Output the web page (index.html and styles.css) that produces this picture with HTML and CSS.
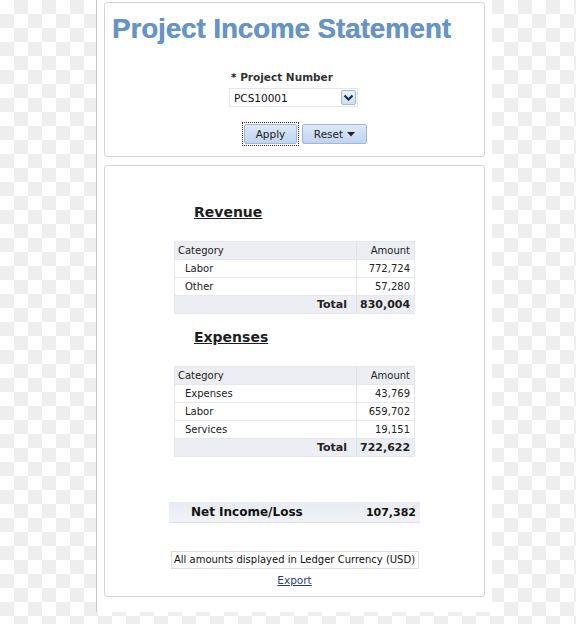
FILE: index.html
```html
<!DOCTYPE html>
<html>
<head>
<meta charset="utf-8">
<link rel="stylesheet" href="styles.css">
</head>
<body>
<div class="page">
  <div class="panel panel-top">
    <h1 class="title">Project Income Statement</h1>
    <div class="form">
      <div class="label"><span class="req">*</span> Project Number</div>
      <div class="select">
        <span class="select-value">PCS10001</span>
        <span class="drop"><svg width="11" height="8" viewBox="0 0 11 8"><path d="M1.5 1.5 L5.5 5.5 L9.5 1.5" fill="none" stroke="#1b2d55" stroke-width="2.2"/></svg></span>
      </div>
      <div class="buttons">
        <span class="focus"><span class="btn btn-apply">Apply</span></span>
        <span class="btn btn-reset">Reset <svg width="8" height="5" viewBox="0 0 8 5"><path d="M0 0 L8 0 L4 4.5 Z" fill="#222"/></svg></span>
      </div>
    </div>
  </div>

  <div class="panel panel-main">
    <div class="block">
      <h2 class="heading">Revenue</h2>
      <table class="grid">
        <tr class="head"><td class="cat">Category</td><td class="amt">Amount</td></tr>
        <tr><td class="cat item">Labor</td><td class="amt">772,724</td></tr>
        <tr><td class="cat item">Other</td><td class="amt">57,280</td></tr>
        <tr class="total"><td class="cat">Total</td><td class="amt">830,004</td></tr>
      </table>
    </div>

    <div class="block block-exp">
      <h2 class="heading">Expenses</h2>
      <table class="grid">
        <tr class="head"><td class="cat">Category</td><td class="amt">Amount</td></tr>
        <tr><td class="cat item">Expenses</td><td class="amt">43,769</td></tr>
        <tr><td class="cat item">Labor</td><td class="amt">659,702</td></tr>
        <tr><td class="cat item">Services</td><td class="amt">19,151</td></tr>
        <tr class="total"><td class="cat">Total</td><td class="amt">722,622</td></tr>
      </table>
    </div>

    <div class="net">
      <span class="net-label">Net Income/Loss</span>
      <span class="net-value">107,382</span>
    </div>

    <div class="note">All amounts displayed in Ledger Currency (USD)</div>
    <div class="export"><a href="#">Export</a></div>
  </div>
</div>
</body>
</html>
```

FILE: styles.css
```css
html, body {
  margin: 0;
  padding: 0;
}
body {
  width: 576px;
  height: 624px;
  background-color: #ffffff;
  background-image: conic-gradient(#eeeeee 25%, transparent 0 50%, #eeeeee 0 75%, transparent 0);
  background-size: 28px 28px;
  font-family: "DejaVu Sans", Verdana, sans-serif;
  font-size: 10px;
  color: #222;
  overflow: hidden;
}
.page {
  margin-left: 96px;
  width: 396px;
  height: 612px;
  box-sizing: border-box;
  background: #fff;
  border-left: 1px solid #c9c9c9;
  padding: 2px 7px 0 7px;
}
.panel {
  border: 1px solid #d4d4d4;
  border-radius: 3px;
  box-sizing: border-box;
  background: #fff;
}
.panel-top {
  height: 155px;
}
.title {
  margin: 10px 0 0 7px;
  font-family: "Liberation Sans", Arial, sans-serif;
  font-weight: bold;
  font-size: 27.6px;
  line-height: 32px;
  color: #6694c9;
  letter-spacing: 0;
  text-shadow: 0.3px 0 0 #6694c9;
}
.form {
  margin: 25px 0 0 124px;
}
.label {
  font-weight: bold;
  font-size: 10.5px;
  line-height: 14px;
  color: #333;
  padding-left: 2px;
}
.req {
  color: #222;
}
.select {
  margin-top: 4px;
  width: 129px;
  height: 19px;
  box-sizing: border-box;
  border: 1px solid #e3e6ea;
  display: flex;
  align-items: center;
  justify-content: space-between;
  padding: 0 1px 0 4px;
}
.select-value {
  font-size: 10.5px;
  color: #111;
}
.drop {
  width: 15px;
  height: 15px;
  box-sizing: border-box;
  border: 1px solid #a8bad3;
  border-radius: 2px;
  background: linear-gradient(#eef3fa, #cfdcee);
  display: flex;
  align-items: center;
  justify-content: center;
}
.buttons {
  margin: 15px 0 0 13px;
  display: flex;
  align-items: center;
  gap: 3px;
}
.focus {
  border: 1px dotted #333;
  padding: 1px;
  display: flex;
}
.btn {
  height: 20px;
  box-sizing: border-box;
  border: 1px solid #9db8dc;
  border-radius: 2px;
  background: linear-gradient(#dde9f8, #bed4ef);
  font-size: 10.5px;
  line-height: 18px;
  color: #222;
  display: flex;
  align-items: center;
  justify-content: center;
  gap: 4px;
}
.btn-apply {
  width: 53px;
}
.btn-reset {
  width: 65px;
}
.panel-main {
  margin-top: 8px;
  height: 432px;
  padding-top: 37px;
}
.block {
  width: 241px;
  margin: 0 auto;
}
.block-exp {
  margin-top: 14px;
}
.heading {
  margin: 0 0 20px 20px;
  font-size: 14px;
  line-height: 18px;
  font-weight: bold;
  text-decoration: underline;
  color: #1e1e1e;
}
.grid {
  width: 241px;
  border-collapse: collapse;
  table-layout: fixed;
  border: 1px solid #e6e8ed;
}
.grid td {
  height: 17px;
  padding: 0 4px 0 3px;
  border-bottom: 1px solid #e6e8ed;
  line-height: 17px;
  white-space: nowrap;
}
.grid .cat {
  width: 174px;
  border-right: 1px solid #dfe3ea;
}
.grid .amt {
  text-align: right;
}
.grid .item {
  padding-left: 10px;
}
.grid .head td {
  background: #eceef3;
}
.grid .total td {
  background: #eceef3;
  font-weight: bold;
  font-size: 11px;
}
.grid .total .cat {
  text-align: right;
  padding-right: 9px;
}
.net {
  margin: 45px auto 0;
  width: 251px;
  height: 21px;
  box-sizing: border-box;
  background: linear-gradient(#e8ecf2, #f1f3f7);
  border-bottom: 1px solid #dde2ea;
  display: flex;
  align-items: center;
  justify-content: space-between;
  padding: 0 4px 0 22px;
  font-weight: bold;
  color: #111;
}
.net-label {
  font-size: 12px;
}
.net-value {
  font-size: 11px;
}
.note {
  margin: 28px auto 0;
  width: 248px;
  height: 18px;
  box-sizing: border-box;
  border: 1px solid #dedede;
  text-align: center;
  line-height: 16px;
  color: #111;
}
.export {
  margin-top: 3px;
  text-align: center;
  line-height: 16px;
  font-size: 10.5px;
}
.export a {
  color: #1f3f8e;
  text-decoration: underline;
}
```
